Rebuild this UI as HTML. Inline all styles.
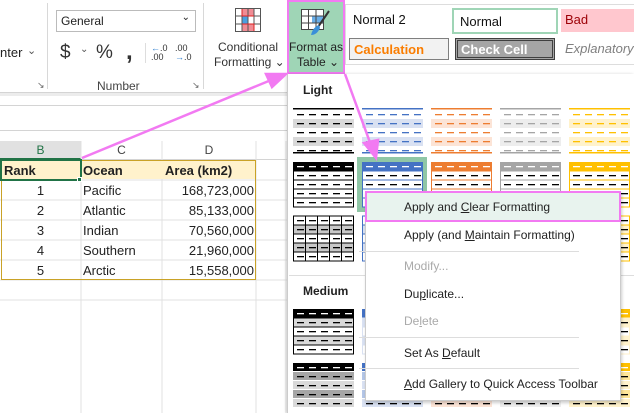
<!DOCTYPE html>
<html><head><meta charset="utf-8"><style>
*{margin:0;padding:0;box-sizing:border-box}
body{width:634px;height:413px;overflow:hidden;background:#fff;font-family:"Liberation Sans",sans-serif;font-size:12px;color:#222;position:relative}
.a{position:absolute;white-space:nowrap}
.menu div.i{position:absolute;left:38px;font-size:12px;color:#222}
u{text-decoration:underline}
</style></head><body>
<!-- ribbon -->
<div class="a" style="left:0;top:0;width:634px;height:93px;background:#fff;border-bottom:1px solid #d4d4d4"></div>
<div class="a" style="left:0;top:93px;width:634px;height:3px;background:#ececec"></div>
<div class="a" style="left:0;top:45px;font-size:13px">nter</div>
<div class="a" style="left:27px;top:44px;font-size:11px;color:#555">&#8964;</div>
<div class="a" style="left:47px;top:3px;width:1px;height:86px;background:#d8d8d8"></div>
<div class="a" style="left:203px;top:3px;width:1px;height:86px;background:#d8d8d8"></div>
<div class="a" style="left:37px;top:80px;font-size:9px;color:#666">&#8600;</div>
<div class="a" style="left:192px;top:80px;font-size:9px;color:#666">&#8600;</div>
<div class="a" style="left:56px;top:10px;width:140px;height:22px;border:1px solid #bbb;padding:3px 4px;font-size:12px">General<span style="position:absolute;right:5px;top:1px;font-size:10px">&#8964;</span></div>
<div class="a" style="left:60px;top:42px;font-size:19px;color:#333">$</div>
<div class="a" style="left:80px;top:44px;font-size:10px;color:#555">&#8964;</div>
<div class="a" style="left:96px;top:42px;font-size:19px;color:#333">%</div>
<div class="a" style="left:126px;top:38px;font-size:24px;font-weight:bold;color:#333">,</div>
<div class="a" style="left:145px;top:43px;width:1px;height:20px;background:#ddd"></div>
<div class="a" style="left:151px;top:44px;font-size:9px;line-height:9px;color:#333"><span style="color:#2f7fd0">&#8592;</span>.0<br>.00</div>
<div class="a" style="left:175px;top:44px;font-size:9px;line-height:9px;color:#333">.00<br><span style="color:#2f7fd0">&#8594;</span>.0</div>
<div class="a" style="left:97px;top:79px;font-size:12px;color:#444">Number</div>
<svg class="a" style="left:235px;top:8px" width="26" height="24"><rect x="0.5" y="0.5" width="25" height="23" fill="#fff" stroke="#555"/><rect x="7" y="1" width="12" height="7" fill="#f08c94"/><rect x="7" y="8" width="6" height="8" fill="#4aa0e0"/><rect x="7" y="16" width="12" height="7" fill="#f08c94"/><path d="M0.5 8h25M0.5 16h25M7 .5v23M13 .5v23M19 .5v23" stroke="#555" fill="none"/><path d="M7 1v7h12M7 16h12v7" stroke="#d22" fill="none"/></svg>
<div class="a" style="left:218px;top:40px;font-size:12px;color:#333">Conditional</div>
<div class="a" style="left:214px;top:55px;font-size:12px;color:#333">Formatting &#8964;</div>
<!-- format as table btn -->
<div class="a" style="left:287px;top:0;width:58px;height:74px;background:#9fd5b6;border:2px solid #f27af2"></div>
<svg class="a" style="left:301px;top:9px" width="30" height="28"><rect x="0.5" y="0.5" width="22" height="20" fill="#fff" stroke="#444"/><rect x="11" y="7" width="11" height="7" fill="#6aaee8"/><path d="M0.5 7h22M0.5 14h22M7.5 .5v20M15 .5v20" stroke="#444" fill="none"/><path d="M28 2L17 18" stroke="#333" stroke-width="2"/><path d="M18 16q-6 2-8 10q6 0 9-7z" fill="#3a8fd8"/></svg>
<div class="a" style="left:289px;top:40px;font-size:12px;color:#222">Format as</div>
<div class="a" style="left:297px;top:55px;font-size:12px;color:#222">Table &#8964;</div>
<!-- styles panel -->
<div class="a" style="left:345px;top:4px;width:289px;height:61px;border:1px solid #ddd;border-right:none;background:#fff"></div>
<div class="a" style="left:353px;top:12px;font-size:13px;color:#111">Normal 2</div>
<div class="a" style="left:452px;top:8px;width:106px;height:26px;border:2px solid #9fd5b6;padding:4px 6px;font-size:13px;color:#111">Normal</div>
<div class="a" style="left:561px;top:9px;width:73px;height:23px;background:#ffc7ce;padding:3px 4px;font-size:13px;color:#9c0006">Bad</div>
<div class="a" style="left:349px;top:38px;width:100px;height:22px;background:#f2f2f2;border:1px solid #7f7f7f;padding:3px 4px;font-size:13px;font-weight:bold;color:#fa7d00">Calculation</div>
<div class="a" style="left:455px;top:38px;width:100px;height:22px;background:#a5a5a5;border:3px double #3f3f3f;padding:1px 3px;font-size:13px;font-weight:bold;color:#fff">Check Cell</div>
<div class="a" style="left:565px;top:41px;font-size:13px;font-style:italic;color:#7f7f7f">Explanatory</div>
<!-- sheet -->
<div class="a" style="left:0;top:105px;width:287px;height:1px;background:#d4d4d4"></div>
<div class="a" style="left:0;top:130px;width:287px;height:1px;background:#d4d4d4"></div>
<div class="a" style="left:0;top:141px;width:287px;height:19px;background:#fff;border-bottom:1px solid #d4d4d4"></div>
<div class="a" style="left:0;top:141px;width:81px;height:19px;background:#e1e1e1;border-bottom:2px solid #217346;text-align:center;line-height:18px;color:#217346">B</div>
<div class="a" style="left:81px;top:141px;width:81px;text-align:center;line-height:18px;color:#444">C</div>
<div class="a" style="left:162px;top:141px;width:94px;text-align:center;line-height:18px;color:#444">D</div>
<svg class="a" style="left:0;top:141px" width="287" height="272"><g stroke="#e0e0e0"><path d="M81 0v272M162 0v272M256 0v272M286 0v272"/><path d="M0 39h287M0 59h287M0 79h287M0 99h287M0 119h287M0 139h287M0 159h287"/></g></svg>
<div class="a" style="left:1px;top:160px;width:255px;height:19px;background:#fff2cc"></div>
<div class="a" style="left:1px;top:160px;width:255px;height:120px;border:1px solid #c9a227"></div>
<div class="a" style="left:0;top:159px;width:82px;height:22px;border:2px solid #217346"></div>
<div class="a" style="left:77px;top:177px;width:5px;height:5px;background:#217346;border:1px solid #fff"></div>
<div class="a" style="left:4px;top:163px;font-weight:bold;font-size:13px">Rank</div>
<div class="a" style="left:83px;top:163px;font-weight:bold;font-size:13px">Ocean</div>
<div class="a" style="left:165px;top:163px;font-weight:bold;font-size:13px">Area (km2)</div>
<div id="rows"></div>
<!-- gallery -->
<div class="a" style="left:287px;top:74px;width:347px;height:339px;background:#fff;border-left:1px solid #ccc;box-shadow:-1px 0 3px rgba(0,0,0,.15)"></div>
<div class="a" style="left:303px;top:83px;font-weight:bold;font-size:12px">Light</div>
<div class="a" style="left:289px;top:275px;width:345px;height:1px;background:#ddd"></div>
<div class="a" style="left:303px;top:284px;font-weight:bold;font-size:12px">Medium</div>
<div class="a" style="left:357px;top:157px;width:70px;height:55px;background:#8fc6a6"></div>
<svg id="g" class="a" style="left:0;top:0" width="634" height="413"></svg>
<!-- menu -->
<div class="a menu" style="left:365px;top:191px;width:256px;height:210px;background:#fff;border:1px solid #ccc;box-shadow:1px 2px 3px rgba(0,0,0,.2)">
<div class="a" style="left:-1px;top:-1px;width:256px;height:31px;background:#e8f3ee;border:2px solid #f27af2"></div>
<div class="i" style="top:8px">Apply and <u>C</u>lear Formatting</div>
<div class="i" style="top:36px">Apply (and <u>M</u>aintain Formatting)</div>
<div class="a" style="left:-6px;top:59px;width:220px;height:1px;background:#ddd;left:-7px"></div>
<div class="i" style="top:67px;color:#aaa">Modify...</div>
<div class="i" style="top:95px">Du<u>p</u>licate...</div>
<div class="i" style="top:122px;color:#aaa">De<u>l</u>ete</div>
<div class="a" style="left:-7px;top:145px;width:220px;height:1px;background:#ddd"></div>
<div class="i" style="top:154px">Set As <u>D</u>efault</div>
<div class="a" style="left:-7px;top:176px;width:220px;height:1px;background:#ddd"></div>
<div class="i" style="top:185px"><u>A</u>dd Gallery to Quick Access Toolbar</div>
</div>
<!-- arrows -->
<svg class="a" style="left:0;top:0" width="634" height="413"><g stroke="#f27af2" stroke-width="2.5" fill="#f27af2"><path d="M82 158L276 78"/><path d="M286 74L266 74L272 87z"/><path d="M345 74L372 148"/><path d="M376 158L364 143L378 140z"/></g></svg>
<script>
var r=[["1","Pacific","168,723,000"],["2","Atlantic","85,133,000"],["3","Indian","70,560,000"],["4","Southern","21,960,000"],["5","Arctic","15,558,000"]],h="";
r.forEach(function(a,i){var t=183+i*20;h+='<div class="a" style="left:0;top:'+t+'px;width:81px;text-align:center;font-size:13px">'+a[0]+'</div><div class="a" style="left:83px;top:'+t+'px;font-size:13px">'+a[1]+'</div><div class="a" style="left:162px;top:'+t+'px;width:92px;text-align:right;font-size:13px">'+a[2]+'</div>';});
document.getElementById('rows').innerHTML=h;
var C=["#000","#4472c4","#ed7d31","#a5a5a5","#ffc000"],L=["#d9d9d9","#d9e1f2","#fce4d6","#ededed","#fff2cc"],M=["#a6a6a6","#b4c6e7","#f8cbad","#c9c9c9","#ffe699"],X=[293,362,431,500,569],s="";
function dash(x,y,c){var o="";for(var k=0;k<5;k++)o+='<rect x="'+(x+4+k*12)+'" y="'+y+'" width="7" height="1.3" fill="'+c+'"/>';return o;}
for(var j=0;j<5;j++){var x=X[j],c=C[j],dc=j==0?"#000":c;
var y=108;s+='<rect x="'+x+'" y="'+y+'" width="61" height="1.5" fill="'+c+'"/>';for(var k=0;k<5;k++){var yy=y+2+k*9;if(k%2==0&&k<4&&false){} if(k==1||k==3)s+='<rect x="'+x+'" y="'+yy+'" width="61" height="9" fill="'+L[j]+'"/>';s+=dash(x,yy+4,dc);}s+='<rect x="'+x+'" y="152" width="61" height="1.5" fill="'+c+'"/>';
y=162;s+='<rect x="'+x+'" y="'+y+'" width="61" height="9" fill="'+c+'"/>'+dash(x,y+4,"#fff");for(k=1;k<5;k++){var yy=y+k*9;s+='<rect x="'+(x+.5)+'" y="'+yy+'" width="60" height="9" fill="#fff" stroke="'+c+'"/>'+dash(x,yy+4,"#000");}
y=216;for(k=0;k<5;k++){var yy=y+k*9;s+='<rect x="'+(x+.5)+'" y="'+yy+'" width="60" height="9" fill="'+(k%2?L[j]=="#d9d9d9"?"#c8c8c8":L[j]:"#fff")+'" stroke="'+c+'"/>';for(var q=1;q<5;q++)s+='<path d="M'+(x+q*12+.5)+' '+yy+'v9" stroke="'+c+'"/>';s+=dash(x,yy+4,"#000");}
y=309;s+='<rect x="'+x+'" y="'+y+'" width="61" height="9" fill="'+c+'"/>'+dash(x,y+4,"#fff");for(k=1;k<5;k++){var yy=y+k*9;s+='<rect x="'+(x+.5)+'" y="'+yy+'" width="60" height="9" fill="'+(k%2?L[j]:"#fff")+'" stroke="'+(j==0?"#000":L[j])+'"/>'+dash(x,yy+4,"#000");}
y=363;s+='<rect x="'+x+'" y="'+y+'" width="61" height="8" fill="'+c+'"/>'+dash(x,y+4,"#fff");for(k=1;k<5;k++){var yy=y+k*9;s+='<rect x="'+x+'" y="'+yy+'" width="61" height="8" fill="'+(k%2?M[j]:L[j])+'"/>'+dash(x,yy+4,"#000");}
}
document.getElementById('g').innerHTML=s;
</script>
</body></html>
